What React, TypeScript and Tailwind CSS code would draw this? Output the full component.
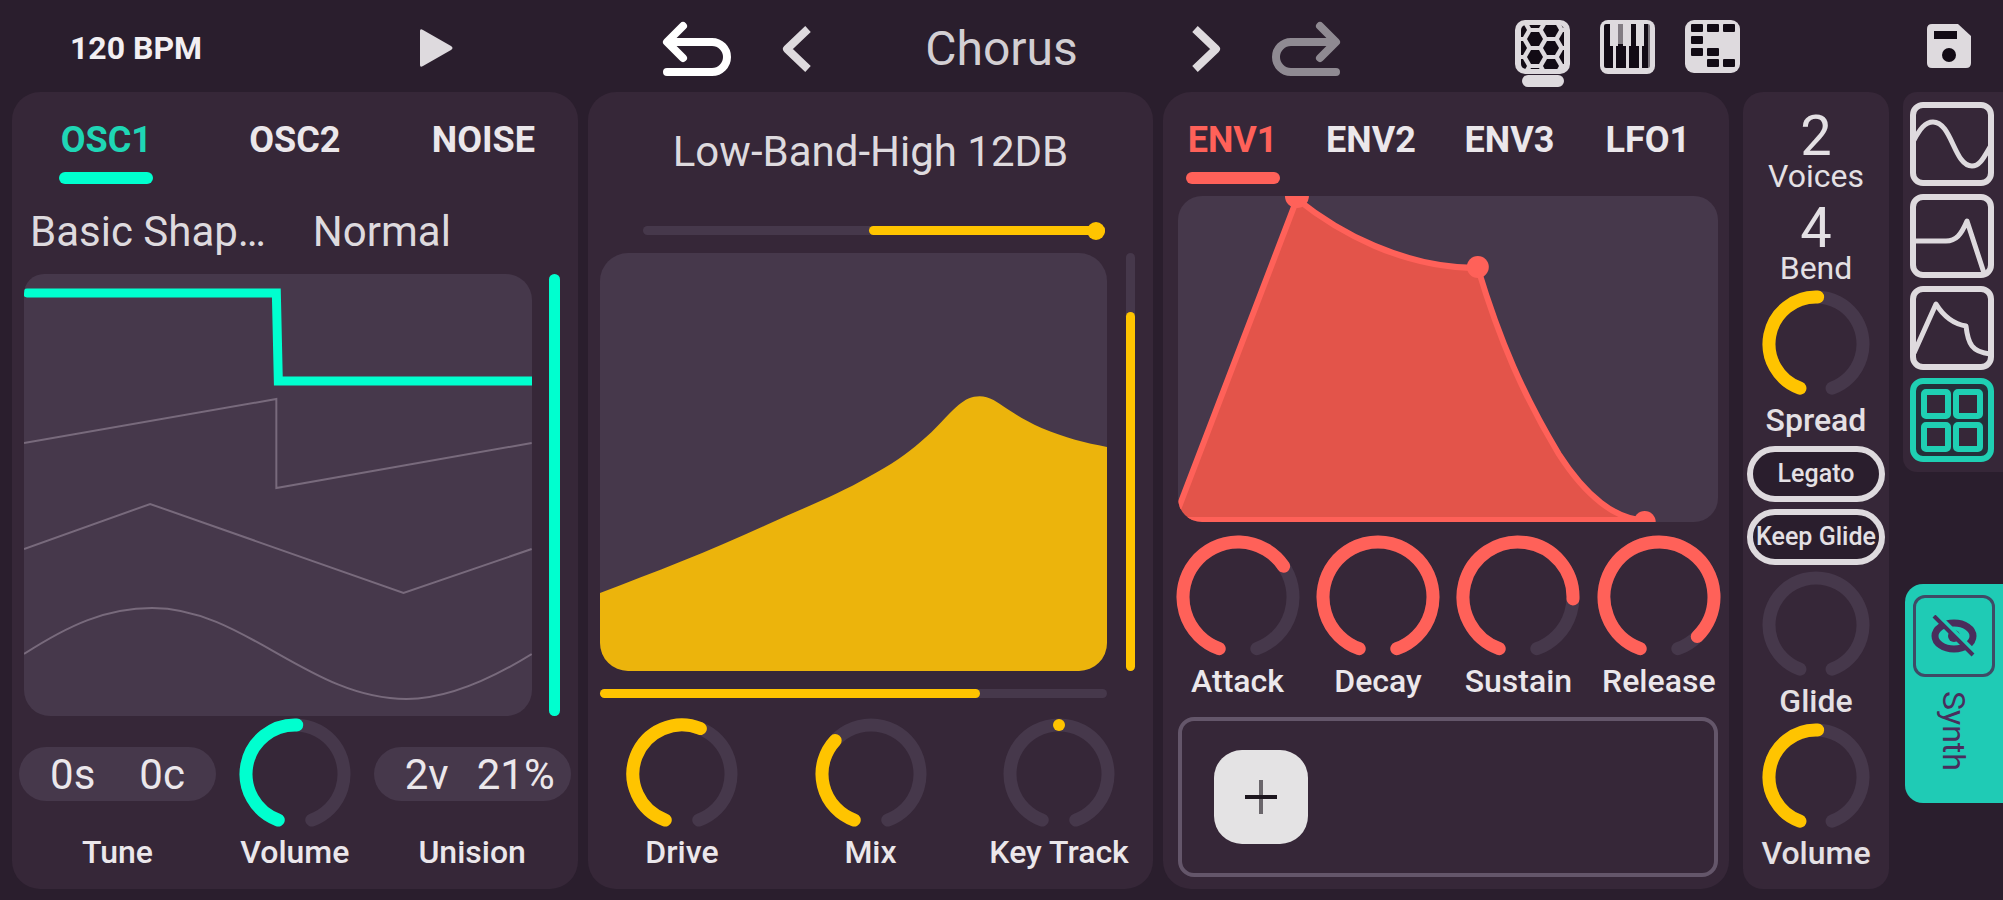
import { useId, useState } from 'react';
import type { ReactNode } from 'react';
import { clsx } from 'clsx';

const TEAL = '#00ffcf';
const YELLOW = '#ffc400';
const RED = '#ff6159';
const TRACK = '#46384b';
const LIGHT = '#dedade';
const PANEL = '#362738';

// Knobs sweep from -160deg to 160deg, 0deg is straight up.
const SWEEP = 160;

function point(angle: number, c: number, r: number) {
  const rad = (angle * Math.PI) / 180;
  return `${(c + r * Math.sin(rad)).toFixed(2)} ${(c - r * Math.cos(rad)).toFixed(2)}`;
}

function arc(from: number, to: number, c: number, r: number) {
  const large = to - from > 180 ? 1 : 0;
  return `M${point(from, c, r)} A${r} ${r} 0 ${large} 1 ${point(to, c, r)}`;
}

interface KnobProps {
  label: string;
  color: string;
  initial: number;
  size?: number;
  bipolar?: boolean;
}

function Knob({ label, color, initial, size = 112, bipolar = false }: KnobProps) {
  const [angle, setAngle] = useState(initial);
  const c = size / 2;
  const r = c - 7;
  const start = bipolar ? 0 : -SWEEP;
  const from = Math.min(start, angle);
  const to = Math.max(start, angle);

  return (
    <label className="flex flex-col items-center">
      <span className="relative block">
        <svg width={size} height={size} fill="none" strokeWidth={13} strokeLinecap="round">
          <path d={arc(-SWEEP, SWEEP, c, r)} stroke={TRACK} />
          {to > from && <path d={arc(from, to, c, r)} stroke={color} />}
          {bipolar && <circle cx={c} cy={c - r} r={6} fill={color} stroke="none" />}
        </svg>
        <input
          type="range"
          min={-SWEEP}
          max={SWEEP}
          value={angle}
          onChange={(e) => setAngle(Number(e.target.value))}
          className="absolute inset-0 h-full w-full cursor-pointer opacity-0"
        />
      </span>
      <span className="mt-0.5 text-[32px] leading-10 font-medium whitespace-nowrap">{label}</span>
    </label>
  );
}

interface SliderProps {
  label: string;
  start?: number;
  end: number;
  color: string;
  vertical?: boolean;
  handle?: boolean;
  className?: string;
}

function Slider({ label, start = 0, end, color, vertical, handle, className }: SliderProps) {
  const fill = vertical
    ? { bottom: `${start}%`, height: `${end - start}%`, backgroundColor: color }
    : { left: `${start}%`, width: `${end - start}%`, backgroundColor: color };

  return (
    <div className={clsx('relative rounded-full bg-[#46384b]', className)}>
      <div className={clsx('absolute rounded-full', vertical ? 'inset-x-0' : 'inset-y-0')} style={fill} />
      {handle && <div className="absolute top-1/2 right-0 size-[18px] -translate-y-1/2 rounded-full bg-[#ffc400]" />}
      <input
        type="range"
        aria-label={label}
        defaultValue={end}
        className="absolute inset-0 h-full w-full cursor-pointer opacity-0"
      />
    </div>
  );
}

interface TabsProps {
  items: string[];
  activeText: string;
  activeBar: string;
  className?: string;
}

function Tabs({ items, activeText, activeBar, className }: TabsProps) {
  const [active, setActive] = useState(items[0]);
  return (
    <div role="tablist" className={clsx('flex', className)}>
      {items.map((item) => (
        <button
          key={item}
          type="button"
          role="tab"
          aria-selected={item === active}
          onClick={() => setActive(item)}
          className="flex flex-1 flex-col items-center gap-3 pt-7"
        >
          <span className={clsx('text-[36px] leading-10 font-bold', item === active ? activeText : 'text-[#ebe7eb]')}>
            {item}
          </span>
          <span className={clsx('h-3 w-[94px] rounded-md', item === active && activeBar)} />
        </button>
      ))}
    </div>
  );
}

function Panel({ children }: { children: ReactNode }) {
  return <section className="flex min-w-0 flex-1 flex-col rounded-[28px] bg-[#362738]">{children}</section>;
}

function UndoIcon({ className }: { className?: string }) {
  return (
    <svg width="71" height="56" fill="none" stroke="currentColor" strokeWidth="8" strokeLinecap="round" strokeLinejoin="round" className={className}>
      <path d="M22 5 6 21 22 37M8 21H51A15 15 0 0 1 51 51H6" />
    </svg>
  );
}

function ChevronIcon({ className }: { className?: string }) {
  return (
    <svg width="32" height="48" fill="none" stroke="currentColor" strokeWidth="8" strokeLinejoin="round" className={className}>
      <path d="M28 4 7 24 28 44" />
    </svg>
  );
}

const HEX_CENTERS = [
  [20, 1], [20, 19], [20, 37], [20, 55],
  [36, 10], [36, 28], [36, 46],
  [4, 10], [4, 28], [4, 46],
  [52, 1], [52, 19], [52, 37], [52, 55],
];

function HexIcon() {
  const clip = useId();
  return (
    <svg width="55" height="54">
      <clipPath id={clip}>
        <rect x="6" y="5" width="43" height="44" rx="5" />
      </clipPath>
      <rect width="55" height="54" rx="10" fill={LIGHT} />
      <g clipPath={`url(#${clip})`} fill="#120b15">
        {HEX_CENTERS.map(([x, y]) => (
          <path key={`${x}-${y}`} d={`M${x - 8} ${y}l4-7h8l4 7-4 7h-8z`} />
        ))}
      </g>
    </svg>
  );
}

function KeysIcon() {
  return (
    <svg width="55" height="54">
      <rect width="55" height="54" rx="8" fill={LIGHT} />
      <rect x="4" y="4" width="46" height="44" rx="2" fill="#120b15" />
      <g fill={LIGHT}>
        <path d="M10 4h8v22h-2v22h-3V26h-3zM23 4h8v22h-2v22h-3V26h-3zM36 4h8v22h-2v22h-3V26h-3z" />
        <path d="M18 4h5v20h-5z" opacity=".55" />
        <path d="M48 4h2v44h-2z" opacity=".5" />
      </g>
    </svg>
  );
}

const PAD_CELLS = [
  [6, 4], [22, 4], [38, 4],
  [6, 16],
  [6, 28], [22, 28],
  [22, 39], [38, 39],
];

function PadsIcon() {
  return (
    <svg width="55" height="54">
      <rect width="55" height="53" rx="9" fill={LIGHT} />
      {PAD_CELLS.map(([x, y]) => (
        <rect key={`${x}-${y}`} x={x} y={y} width="12" height="8" rx="1" fill="#120b15" />
      ))}
    </svg>
  );
}

function Header() {
  return (
    <header className="grid h-[92px] grid-cols-[1fr_681px_1fr] items-center pb-2">
      <div className="flex items-center justify-between pr-[208px] pl-[70px]">
        <button type="button" className="mt-2 text-[32px] leading-10 font-bold whitespace-nowrap text-[#f2eff2]">
          120 BPM
        </button>
        <button type="button" aria-label="Play" className="mt-2">
          <svg width="34" height="40" fill={LIGHT}>
            <path d="M1 3Q1 0 4 2L32 18Q35 20 32 22L4 38Q1 40 1 37Z" />
          </svg>
        </button>
      </div>

      <div className="flex items-center pt-2.5">
        <button type="button" aria-label="Undo" className="text-white">
          <UndoIcon />
        </button>
        <button type="button" aria-label="Previous preset" className="ml-12 text-[#dedade]">
          <ChevronIcon />
        </button>
        <button type="button" className="flex-1 text-center text-[48px] leading-[56px] text-[#d3cfd3]">
          Chorus
        </button>
        <button type="button" aria-label="Next preset" className="mr-12 text-[#dedade]">
          <ChevronIcon className="-scale-x-100" />
        </button>
        <button type="button" aria-label="Redo" className="text-[#8f8a92]">
          <UndoIcon className="-scale-x-100" />
        </button>
      </div>

      <div className="flex items-start justify-between pt-5 pr-8 pl-[173px]">
        <div className="flex items-start gap-[30px]">
          <button type="button" aria-label="Hex keyboard" className="flex flex-col items-center gap-px">
            <HexIcon />
            <span className="h-3 w-[42px] rounded-md bg-[#dedade]" />
          </button>
          <button type="button" aria-label="Piano keyboard">
            <KeysIcon />
          </button>
          <button type="button" aria-label="Pads">
            <PadsIcon />
          </button>
        </div>
        <button type="button" aria-label="Save" className="mt-1">
          <svg width="44" height="44">
            <path d="M5 0H31L44 12V39Q44 44 39 44H5Q0 44 0 39V5Q0 0 5 0Z" fill={LIGHT} />
            <rect x="7" y="7" width="23" height="8" fill="#120b15" />
            <circle cx="22" cy="31" r="7" fill="#120b15" />
          </svg>
        </button>
      </div>
    </header>
  );
}

function OscPanel() {
  return (
    <Panel>
      <Tabs items={['OSC1', 'OSC2', 'NOISE']} activeText="text-[#1fd6b5]" activeBar="bg-[#00ffcf]" />
      <div className="mt-6 flex text-[42px] leading-12 text-[#dedade]">
        <button type="button" className="w-1/2 pl-[18px] text-left whitespace-nowrap">Basic Shap…</button>
        <button type="button" className="pl-[18px] text-left">Normal</button>
      </div>

      <div className="mt-[18px] flex flex-1 gap-[17px] pr-[18px] pl-3">
        <div className="relative min-h-[300px] flex-1 overflow-hidden rounded-[26px] rounded-tl-[20px] bg-[#46384b]">
          <svg viewBox="0 0 507 442" preserveAspectRatio="none" fill="none" className="absolute inset-0 h-full w-full">
            <g stroke="#786a7c" strokeWidth="2">
              <path d="M0 169 252 125V214L507 169" />
              <path d="M0 275 126 230 379 319 507 275" />
              <path d="M0 380C45 351 82 334 128 334C220 334 285 425 382 425C425 425 470 403 507 380" />
            </g>
            <path d="M3 19H252L254 107H507" stroke={TEAL} strokeWidth="9" strokeLinecap="round" />
          </svg>
        </div>
        <Slider label="Wave position" end={100} color={TEAL} vertical className="w-[11px]" />
      </div>

      <div className="mt-0.5 grid grid-cols-[197px_1fr_197px] px-[7px] pb-[17px] text-[#ebe7eb]">
        <div className="flex flex-col items-center">
          <div className="flex h-28 w-full items-center">
            <div className="flex h-[54px] w-full items-center justify-center gap-11 rounded-full bg-[#46384b] text-[42px]">
              <button type="button">0s</button>
              <button type="button">0c</button>
            </div>
          </div>
          <span className="mt-0.5 text-[32px] leading-10 font-medium">Tune</span>
        </div>
        <Knob label="Volume" color={TEAL} initial={2} />
        <div className="flex flex-col items-center">
          <div className="flex h-28 w-full items-center">
            <div className="flex h-[54px] w-full items-center justify-end gap-7 rounded-full bg-[#46384b] pr-4 text-[42px]">
              <button type="button">2v</button>
              <button type="button">21%</button>
            </div>
          </div>
          <span className="mt-0.5 text-[32px] leading-10 font-medium">Unision</span>
        </div>
      </div>
    </Panel>
  );
}

function FilterPanel() {
  return (
    <Panel>
      <button type="button" className="pt-9 text-center text-[42px] leading-12 text-[#dedade]">
        Low-Band-High 12DB
      </button>
      <Slider label="Filter blend" start={49} end={100} color={YELLOW} handle className="mt-[50px] mr-12 ml-[55px] h-[9px]" />

      <div className="mt-[18px] flex flex-1 gap-[19px] pr-[18px] pl-3">
        <div className="relative min-h-[300px] flex-1 overflow-hidden rounded-[28px] bg-[#46384b]">
          <svg viewBox="0 0 507 418" preserveAspectRatio="none" className="absolute inset-0 h-full w-full">
            <path
              d="M0 340C55 319 110 298 166 272C215 250 240 240 268 224C292 211 306 201 320 189C336 176 346 162 358 152C368 143 381 140 393 147C406 155 420 166 441 175C465 185 485 190 507 194V418H0Z"
              fill="#ecb40c"
            />
          </svg>
        </div>
        <Slider label="Resonance" end={86} color={YELLOW} vertical className="w-[9px]" />
      </div>
      <Slider label="Cutoff" end={75} color={YELLOW} className="mt-[18px] mr-[46px] ml-3 h-[9px]" />

      <div className="mt-5 grid grid-cols-3 pb-[17px] text-[#ebe7eb]">
        <Knob label="Drive" color={YELLOW} initial={22} />
        <Knob label="Mix" color={YELLOW} initial={-47} />
        <Knob label="Key Track" color={YELLOW} initial={0} bipolar />
      </div>
    </Panel>
  );
}

function EnvelopePanel() {
  return (
    <Panel>
      <Tabs
        items={['ENV1', 'ENV2', 'ENV3', 'LFO1']}
        activeText="text-[#ff6159]"
        activeBar="bg-[#ff6159]"
        className="pr-3"
      />

      <div className="relative mt-3 mr-[11px] ml-[15px] min-h-[240px] flex-1 overflow-hidden rounded-[24px] bg-[#46384b]">
        <svg viewBox="0 0 540 326" preserveAspectRatio="none" className="absolute inset-0 h-full w-full">
          <path
            d="M-4 324 119 3C160 36 225 72 300 72C322 145 346 200 381 258C408 300 438 324 467 324Z"
            fill="#e3544a"
            stroke={RED}
            strokeWidth="6"
          />
          <g fill={RED}>
            <circle cx="119" cy="0" r="12" />
            <circle cx="300" cy="71" r="11" />
            <circle cx="467" cy="326" r="11" />
          </g>
        </svg>
      </div>

      <div className="mt-[13px] grid grid-cols-4 pl-1 text-[#ebe7eb]">
        <Knob label="Attack" color={RED} initial={56} size={124} />
        <Knob label="Decay" color={RED} initial={160} size={124} />
        <Knob label="Sustain" color={RED} initial={92} size={124} />
        <Knob label="Release" color={RED} initial={136} size={124} />
      </div>

      <div className="mt-4 mr-[11px] mb-3 ml-[15px] flex h-40 items-center rounded-2xl border-4 border-[#64566a] pl-8">
        <button
          type="button"
          aria-label="Add modulation"
          className="flex size-[94px] items-center justify-center rounded-[28px] bg-[#e4e3e4]"
        >
          <svg width="32" height="34" strokeWidth="4" stroke="#1c161e">
            <path d="M16 0V34" stroke="#6a666b" />
            <path d="M0 17H32" />
          </svg>
        </button>
      </div>
    </Panel>
  );
}

function Stepper({ value, label }: { value: number; label: string }) {
  return (
    <button type="button" className="mb-4 flex flex-col items-center gap-1">
      <span className="text-[56px] leading-10">{value}</span>
      <span className="text-[32px] leading-8">{label}</span>
    </button>
  );
}

function VoicePanel() {
  return (
    <section className="flex w-[146px] shrink-0 flex-col items-center rounded-[20px] bg-[#362738] pt-6 text-[#e4e0e4]">
      <Stepper value={2} label="Voices" />
      <Stepper value={4} label="Bend" />
      <div className="-mt-2.5">
        <Knob label="Spread" color={YELLOW} initial={2} size={108} />
      </div>
      <button
        type="button"
        className="mt-1.5 h-14 w-[138px] rounded-full border-[6px] border-[#dedade] bg-[#2a1e2d] text-[25px] font-medium whitespace-nowrap"
      >
        Legato
      </button>
      <button
        type="button"
        className="mt-[7px] flex h-14 w-[138px] items-center justify-center rounded-full border-[6px] border-[#dedade] bg-[#2a1e2d] text-[25px] font-medium whitespace-nowrap"
      >
        Keep Glide
      </button>
      <div className="mt-1.5 flex flex-col gap-0.5">
        <Knob label="Glide" color={YELLOW} initial={-160} size={108} />
        <Knob label="Volume" color={YELLOW} initial={2} size={108} />
      </div>
    </section>
  );
}

const VIEWS = [
  { name: 'Oscillator view', d: 'M4 38C10 27 15 20 23 20C42 20 44 64 62 64C70 64 74 55 80 45' },
  { name: 'Filter view', d: 'M4 47H36C46 47 51 41 57 27L74 79' },
  { name: 'Envelope view', d: 'M4 67 26 18C34 31 44 38 56 40C58 58 62 66 80 68' },
];

function SideRail() {
  return (
    <aside className="flex w-[100px] shrink-0 flex-col">
      <nav className="flex flex-col items-start gap-2 rounded-l-[14px] bg-[#362738] py-2.5 pl-[7px]">
        {VIEWS.map((view) => (
          <button key={view.name} type="button" aria-label={view.name}>
            <svg width="84" height="84" fill="none" stroke={LIGHT} strokeLinejoin="round">
              <rect x="3" y="3" width="78" height="78" rx="10" strokeWidth="6" />
              <path d={view.d} strokeWidth="5" />
            </svg>
          </button>
        ))}
        <button type="button" aria-label="All views">
          <svg width="84" height="84" fill="none" stroke="#1fcfb3">
            <rect x="3" y="3" width="78" height="78" rx="10" strokeWidth="6" fill="#24303a" />
            <g strokeWidth="6" fill={PANEL}>
              <rect x="14" y="14" width="24" height="24" rx="2" />
              <rect x="46" y="14" width="24" height="24" rx="2" />
              <rect x="14" y="47" width="24" height="24" rx="2" />
              <rect x="46" y="47" width="24" height="24" rx="2" />
            </g>
          </svg>
        </button>
      </nav>

      <div className="mt-28 ml-0.5 flex h-[219px] flex-col items-start rounded-l-[18px] bg-[#1fcbb5] pt-[11px] pl-2 text-[#4a2d5c]">
        <button
          type="button"
          aria-label="Hide synth"
          className="flex size-[82px] items-center justify-center rounded-xl border-[3px] border-[#3f4a66]"
        >
          <svg width="48" height="42" fill="none" stroke="currentColor">
            <ellipse cx="24" cy="21" rx="19" ry="13" strokeWidth="7" />
            <circle cx="24" cy="21" r="6" fill="currentColor" stroke="none" />
            <path d="M8 0 47 39" stroke="#1fcbb5" strokeWidth="4" />
            <path d="M4 1 43 40" strokeWidth="4" />
          </svg>
        </button>
        <span className="mt-3.5 w-[82px] text-[32px] leading-[82px] [writing-mode:vertical-rl]">Synth</span>
      </div>
    </aside>
  );
}

export default function App() {
  return (
    <div className="flex min-h-screen flex-col bg-[#2a1e2d] font-[Roboto,sans-serif]">
      <Header />
      <main className="flex flex-1 gap-3.5 pb-[11px] pl-3">
        <div className="flex min-w-0 flex-1 gap-2.5">
          <OscPanel />
          <FilterPanel />
          <EnvelopePanel />
        </div>
        <VoicePanel />
        <SideRail />
      </main>
    </div>
  );
}
